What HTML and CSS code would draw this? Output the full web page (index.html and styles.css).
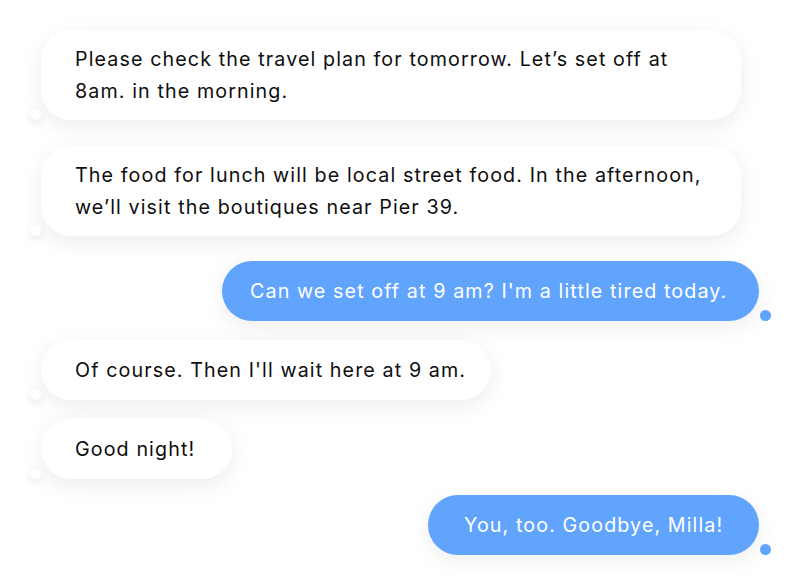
FILE: index.html
```html
<!DOCTYPE html>
<html>
<head>
<meta charset="utf-8">
<link rel="stylesheet" href="styles.css">
</head>
<body>
<div class="chat">
  <div class="msg in wide m1">Please check the travel plan for tomorrow. Let’s set off at<br>8am. in the morning.</div>
  <div class="msg in wide m2">The food for lunch will be local street food. In the afternoon,<br>we’ll visit the boutiques near Pier 39.</div>
  <div class="msg out m3">Can we set off at 9 am? I'm a little tired today.</div>
  <div class="msg in m4">Of course. Then I'll wait here at 9 am.</div>
  <div class="msg in m5">Good night!</div>
  <div class="msg out m6">You, too. Goodbye, Milla!</div>
</div>
</body>
</html>
```

FILE: styles.css
```css
html, body {
  margin: 0;
  padding: 0;
  background: #ffffff;
}
.chat {
  width: 800px;
  height: 587px;
  box-sizing: border-box;
  padding: 30px 41px 0 41px;
  display: flex;
  flex-direction: column;
  font-family: "Inter", "Open Sans", sans-serif;
  font-size: 19.7px;
  letter-spacing: 1.1px;
  line-height: 32px;
}
.msg {
  position: relative;
  box-sizing: border-box;
  height: 60px;
  padding: 14px 34px;
  border-radius: 30px;
  white-space: nowrap;
}
.wide {
  width: 700px;
  height: 90px;
  padding: 13px 34px;
}
.in {
  align-self: flex-start;
  background: #ffffff;
  color: #0e0e0e;
  box-shadow: 0 6px 22px rgba(0, 0, 0, 0.08);
}
.out {
  align-self: flex-end;
  background: #61a4fe;
  color: #ffffff;
  box-shadow: 0 6px 22px rgba(0, 0, 0, 0.07);
}
.in::after, .out::after {
  content: "";
  position: absolute;
  bottom: 0;
  width: 11px;
  height: 11px;
  border-radius: 50%;
}
.in::after {
  left: -11px;
  background: #ffffff;
  box-shadow: 0 3px 8px rgba(0, 0, 0, 0.10);
}
.out::after {
  right: -12px;
  background: #61a4fe;
}
.m2 { margin-top: 26px; }
.m3 { margin-top: 25px; width: 537px; padding-left: 28px; padding-right: 0; }
.m4 { margin-top: 19px; width: 450px; }
.m5 { margin-top: 19px; width: 191px; }
.m6 { margin-top: 16px; width: 331px; padding-left: 36px; padding-right: 0; }
```
